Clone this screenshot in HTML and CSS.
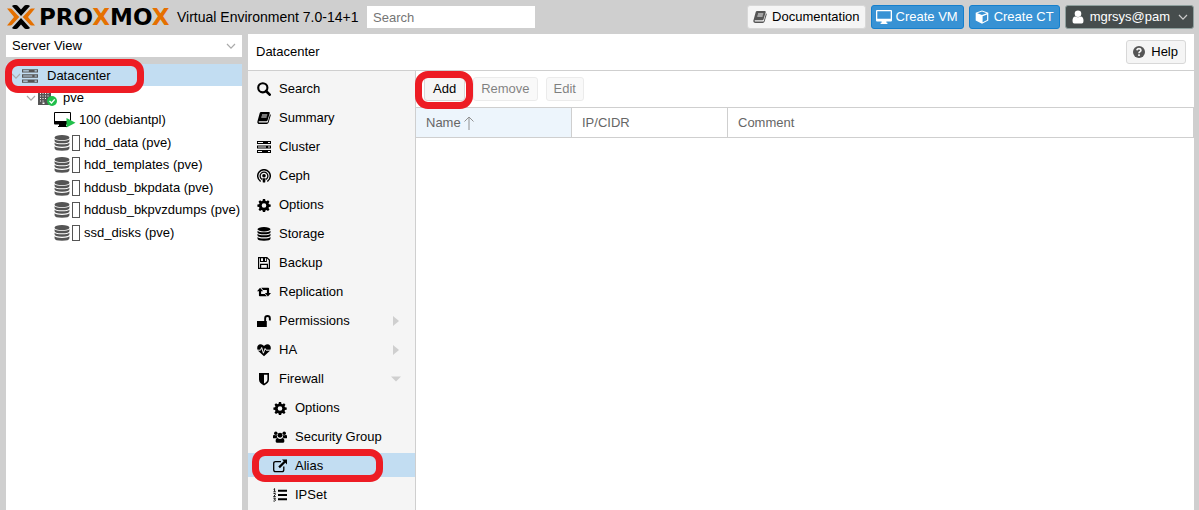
FILE: index.html
```html
<!DOCTYPE html>
<html lang="en">
<head>
<meta charset="utf-8">
<meta name="viewport" content="width=device-width, initial-scale=1">
<title>Proxmox Virtual Environment</title>
<link rel="stylesheet" href="styles.css">
</head>
<body>
<svg class="sprite" aria-hidden="true">
  <symbol id="i-search" viewBox="0 0 14 14"><circle cx="5.8" cy="5.8" r="4.6" fill="none" stroke="currentColor" stroke-width="2.1"/><path d="M9 9l3.7 3.7" stroke="currentColor" stroke-width="2.6" stroke-linecap="round"/></symbol>
  <symbol id="i-book" viewBox="0 0 14 14"><path fill="currentColor" fill-rule="evenodd" d="M4.2 1h7.6c.8 0 1.1.6.9 1.3l-2.1 7c-.2.7-.6 1-1.300 1H2.100c-.4 0-.6.3-.5.6.1.5.6.700 1.200.700h7c.5 0 .9-.2 1-.7L13 3.200c.7.3.9.8.7 1.400l-2.100 7c-.3.900-1 1.400-1.900 1.400H2.500C1 13 0 11.700.4 10.400L2.600 2.500C2.900 1.500 3.300 1 4.200 1zM5.100 3.500l-.3.9h5.300l.3-.9zM4.500 5.600l-.3.9h5.300l.3-.9z"/></symbol>
  <symbol id="i-server" viewBox="0 0 14 14"><path fill="currentColor" fill-rule="evenodd" d="M0 1h14v3H0zM0 5.500h14v3H0zM0 10h14v3H0zM1 2v1h5V2zM1 6.500v1h8v-1zM1 11v1h4v-1zM11 2v1h2V2zM11 6.500v1h2v-1zM11 11v1h2v-1z"/></symbol>
  <symbol id="i-ceph" viewBox="0 0 14 14"><g fill="none" stroke="currentColor" stroke-width="1.300" stroke-linecap="round"><path d="M3.200 12A6.300 6.300 0 1 1 10.800 12" stroke-width="1.500"/><path d="M4.500 10A3.900 3.900 0 1 1 9.500 10"/></g><circle cx="7" cy="6.700" r="1.800" fill="currentColor"/><path fill="currentColor" d="M5.300 9.200h3.400L8.100 13.600H5.900z"/></symbol>
  <symbol id="i-gear" viewBox="0 0 14 14"><path fill="currentColor" fill-rule="evenodd" d="M5.900 1h2.200l.3 1.700 1.100.5 1.500-1 1.500 1.500-1 1.500.5 1.100 1.700.3v2.100l-1.700.3-.5 1.100 1 1.500-1.500 1.500-1.500-1-1.100.5-.3 1.500H5.900l-.3-1.500-1.100-.5-1.500 1-1.500-1.500 1-1.500L2 9 .4 8.700V6.600L2 6.300l.5-1.100-1-1.500L3 2.200l1.500 1 1.100-.5zM7 5.200a2.300 2.300 0 1 0 0 4.600 2.300 2.300 0 0 0 0-4.600z"/></symbol>
  <symbol id="i-db" viewBox="0 0 14 14"><g fill="currentColor"><ellipse cx="7" cy="2.300" rx="6.500" ry="2.200"/><path d="M.5 3.700q1.600 1.500 6.500 1.500t6.500-1.500v1.500q0 2-6.500 2t-6.500-2z"/><path d="M.5 6.700q1.600 1.500 6.500 1.500t6.500-1.500v1.500q0 2-6.500 2t-6.500-2z"/><path d="M.5 9.900q1.600 1.500 6.500 1.500t6.500-1.500v1.700q0 2.200-6.500 2.200t-6.500-2.200z"/></g></symbol>
  <symbol id="i-floppy" viewBox="0 0 14 14"><path fill="none" stroke="currentColor" stroke-width="1.200" d="M1.600 1.600h8.300l2.500 2.500v8.300H1.600zM3.600 12.400V8.300h6.800v4.100"/><path fill="currentColor" fill-rule="evenodd" d="M3 1.500h6.800V6H3zM4 2v3h2V2zM8 2v3h1V2z"/></symbol>
  <symbol id="i-retweet" viewBox="0 0 16 14"><path fill="currentColor" d="M3.500 2L7 6H4.700v3.300H9l2.200 2.600H3.200q-1 0-1-.8V6H0zM12.500 12L9 8h2.300V4.700H7L4.800 2.100h8q1 0 1 .8V8H16z"/></symbol>
  <symbol id="i-unlock" viewBox="0 0 14 14"><path fill="currentColor" d="M0 7h7.200V4.400a3.300 3.300 0 0 1 6.600 0v2.100h-1.900V4.400a1.400 1.400 0 0 0-2.800 0V7h.7v6H0z"/></symbol>
  <symbol id="i-heart" viewBox="0 0 14 14"><path fill="currentColor" d="M7 13.300L1.300 8C-.5 6.100-.3 1.200 3.600 1.200 5.400 1.200 6.400 2.300 7 3c.6-.7 1.600-1.800 3.400-1.800 3.900 0 4.100 4.900 2.300 6.800z"/><path fill="none" stroke="#f5f5f5" stroke-width="1" d="M0 7.200h3.500l1.200-2.700 1.700 5.700 1.700-4.700 1 1.700H14"/></symbol>
  <symbol id="i-shield" viewBox="0 0 14 14"><path fill="currentColor" fill-rule="evenodd" d="M2 1h10v6.600c0 2.900-2.200 4.500-5 5.900-2.800-1.400-5-3-5-5.900zM7 2.700v8.800c2-1.100 3.400-2.200 3.400-4V2.700z"/></symbol>
  <symbol id="i-users" viewBox="0 0 16 14"><g fill="currentColor"><circle cx="3.200" cy="2.600" r="2"/><circle cx="12.800" cy="2.600" r="2"/><path d="M0 8V6.200Q0 4.400 1.200 4.400q1.800 1 3.200.4-.1 1.700.9 2.900-1.100 0-1.800.7H1Q0 8.400 0 8zM16 8V6.200q0-1.800-1.200-1.800-1.800 1-3.200.4.100 1.700-.9 2.900 1.100 0 1.800.7H15q1 0 1-.4z"/><circle cx="8" cy="5" r="2.800"/><path d="M3 11.800q0-3.600 2.300-3.600 1.300 1 2.700 1t2.700-1q2.300 0 2.300 3.600 0 1.900-1.800 1.900H4.800Q3 13.700 3 11.800z"/></g></symbol>
  <symbol id="i-external" viewBox="0 0 14 14"><path fill="none" stroke="currentColor" stroke-width="1.300" d="M8 2.600H2.600q-1.900 0-1.900 1.900v6.300q0 1.900 1.900 1.900h6.300q1.900 0 1.900-1.900V7.500"/><path fill="currentColor" d="M9 .5h5v5l-1.700-1.700-5.400 5.400-1.600-1.600 5.400-5.400z"/></symbol>
  <symbol id="i-listol" viewBox="0 0 14 14"><path fill="currentColor" d="M5 1.700h9v2H5zM5 6h9v2H5zM5 10.300h9v2H5z"/><path fill="none" stroke="currentColor" stroke-width=".9" d="M.6 1.300l1-.7v3M.4 3.800h2.400M.5 5.500h1.800v1L.6 8.600h2.200M.4 10.200h2l-1 1.200q1.200 0 1.100 1-.3 1-2.100.6"/></symbol>
  <symbol id="i-desktop" viewBox="0 0 16 14"><path fill="currentColor" fill-rule="evenodd" d="M1 0h14q1 0 1 1v9.500q0 1-1 1h-4.600v1.200h1V14H4.600v-1.300h1v-1.200H1q-1 0-1-1V1q0-1 1-1zM1.300 1.300v7.400h13.400V1.300z"/></symbol>
  <symbol id="i-cube" viewBox="0 0 14 14"><path fill="currentColor" fill-rule="evenodd" d="M7 .4l6.300 2.300v7.900L7 13.800.7 10.600V2.700zM7 1.600L2.300 3.300 7 5l4.700-1.700zM7.600 6.200v6l4.500-2.300V4.600z"/></symbol>
  <symbol id="i-user" viewBox="0 0 14 14"><circle cx="7" cy="3.700" r="3.300" fill="currentColor"/><path fill="currentColor" d="M1.500 11q0-4.500 2.700-4.500 2.800 1.600 5.600 0 2.700 0 2.700 4.500 0 2.500-1.800 2.500H3.300Q1.500 13.500 1.500 11z"/></symbol>
  <symbol id="i-help" viewBox="0 0 14 14"><circle cx="7" cy="7" r="6" fill="currentColor"/><path fill="none" stroke="#f5f5f5" stroke-width="1.700" d="M4.800 5.300Q5.300 3.700 7 3.700t1.900 1.500Q8.900 6.200 7.900 6.700 7 7.200 7 8.300M7 9.300V11"/></symbol>
  <symbol id="i-building" viewBox="0 0 14 14"><path fill="currentColor" fill-rule="evenodd" d="M0 0h13v14H0zM2 2v1h1V2zM4.500 2v1h1V2zM7 2v1h1V2zM9.500 2v1h1V2zM2 4.500v1h1v-1zM4.500 4.500v1h1v-1zM7 4.500v1h1v-1zM9.500 4.500v1h1v-1zM2 7v1h1V7zM4.500 7v1h1V7zM7 7v1h1V7zM2 9.500v1h1v-1zM4.500 9.500v1h1v-1zM4.500 11.500V13h2v-1.500z"/></symbol>
  <symbol id="i-chevron" viewBox="0 0 10 10"><path fill="none" stroke="currentColor" stroke-width="1.200" d="M1 3l4 4.200L9 3"/></symbol>
  <symbol id="i-right" viewBox="0 0 10 10"><path fill="currentColor" d="M2 0l6 5-6 5z"/></symbol>
  <symbol id="i-down" viewBox="0 0 10 10"><path fill="currentColor" d="M0 2.500h10L5 7.500z"/></symbol>
</svg>

<div class="app">
  <header class="topbar">
    <div class="brand">
      <svg class="mark" viewBox="0 0 28 26" aria-hidden="true">
        <path fill="#000" d="M5 2Q6 1 7.200 1H9q1 0 1.700.8L14 5.500l3.300-3.700Q18 1 19 1h1.800Q22 1 23 2l-9 10zM5 24q1 1 2.200 1H9q1 0 1.700-.8l3.300-3.700 3.300 3.700q.7.800 1.700.8h1.800q1.200 0 2.200-1l-9-10z"/>
        <path fill="#e57000" d="M0 4.500h3.300q1.200 0 2 .9l7 7.600-7 7.600q-.8.900-2 .9H0L7 13zM28 4.500h-3.300q-1.200 0-2 .9l-7 7.600 7 7.600q.8.900 2 .9H28L21 13z"/>
      </svg>
      <span class="wordmark">PRO<span class="accent">X</span>MO<span class="accent">X</span></span>
    </div>
    <span class="version">Virtual Environment 7.0-14+1</span>
    <input class="search" type="search" placeholder="Search" aria-label="Search">
    <div class="actions">
      <button class="btn" type="button"><svg class="icon"><use href="#i-book"/></svg>Documentation</button>
      <button class="btn primary" type="button"><svg class="icon wide"><use href="#i-desktop"/></svg>Create VM</button>
      <button class="btn primary" type="button"><svg class="icon"><use href="#i-cube"/></svg>Create CT</button>
      <button class="btn account" type="button"><svg class="icon"><use href="#i-user"/></svg>mgrsys@pam<svg class="chevron"><use href="#i-chevron"/></svg></button>
    </div>
  </header>

  <aside class="sidebar">
    <div class="view">
      <select class="view-select" aria-label="View"><option>Server View</option></select>
      <svg class="chevron"><use href="#i-chevron"/></svg>
    </div>
    <ul class="tree">
      <li class="node selected"><svg class="chevron"><use href="#i-chevron"/></svg><svg class="icon wide"><use href="#i-server"/></svg><a class="label" href="#dc">Datacenter</a><span class="marker"></span></li>
      <li class="node depth1"><svg class="chevron"><use href="#i-chevron"/></svg>
        <svg class="node-icon" viewBox="0 0 20 16"><use href="#i-building" y="1" width="14" height="14"/><circle cx="14" cy="11" r="5" fill="#21bf4b"/><path d="M11.500 11l2 2 3.200-3.600" fill="none" stroke="#fff" stroke-width="1.400"/></svg>
        <a class="label" href="#pve">pve</a></li>
      <li class="node depth2">
        <svg class="vm-icon" viewBox="0 0 22 16"><path fill="#000" fill-rule="evenodd" d="M1 0h15q1 0 1 1v10.500q0 1-1 1h-4V14h1v1H4v-1h1v-1.500H1q-1 0-1-1V1q0-1 1-1zM1 1v8h15V1z"/><path fill="#21bf4b" d="M12.500 6l9 4.800-9 4.800z"/></svg>
        <a class="label" href="#vm100">100 (debiantpl)</a></li>
      <li class="node depth2"><svg class="icon wide"><use href="#i-db"/></svg><span class="usage"></span><a class="label" href="#s1">hdd_data (pve)</a></li>
      <li class="node depth2"><svg class="icon wide"><use href="#i-db"/></svg><span class="usage"></span><a class="label" href="#s2">hdd_templates (pve)</a></li>
      <li class="node depth2"><svg class="icon wide"><use href="#i-db"/></svg><span class="usage"></span><a class="label" href="#s3">hddusb_bkpdata (pve)</a></li>
      <li class="node depth2"><svg class="icon wide"><use href="#i-db"/></svg><span class="usage"></span><a class="label" href="#s4">hddusb_bkpvzdumps (pve)</a></li>
      <li class="node depth2"><svg class="icon wide"><use href="#i-db"/></svg><span class="usage"></span><a class="label" href="#s5">ssd_disks (pve)</a></li>
    </ul>
  </aside>

  <main class="panel">
    <div class="panel-head">
      <h1 class="title">Datacenter</h1>
      <button class="btn" type="button"><svg class="icon"><use href="#i-help"/></svg>Help</button>
    </div>
    <nav class="menu" aria-label="Datacenter">
      <a class="item" href="#search"><svg class="icon"><use href="#i-search"/></svg>Search</a>
      <a class="item" href="#summary"><svg class="icon"><use href="#i-book"/></svg>Summary</a>
      <a class="item" href="#cluster"><svg class="icon"><use href="#i-server"/></svg>Cluster</a>
      <a class="item" href="#ceph"><svg class="icon"><use href="#i-ceph"/></svg>Ceph</a>
      <a class="item" href="#options"><svg class="icon"><use href="#i-gear"/></svg>Options</a>
      <a class="item" href="#storage"><svg class="icon"><use href="#i-db"/></svg>Storage</a>
      <a class="item" href="#backup"><svg class="icon"><use href="#i-floppy"/></svg>Backup</a>
      <a class="item" href="#replication"><svg class="icon"><use href="#i-retweet"/></svg>Replication</a>
      <a class="item" href="#permissions"><svg class="icon"><use href="#i-unlock"/></svg>Permissions<svg class="arrow"><use href="#i-right"/></svg></a>
      <a class="item" href="#ha"><svg class="icon"><use href="#i-heart"/></svg>HA<svg class="arrow"><use href="#i-right"/></svg></a>
      <a class="item" href="#firewall"><svg class="icon"><use href="#i-shield"/></svg>Firewall<svg class="arrow"><use href="#i-down"/></svg></a>
      <a class="item sub" href="#fw-options"><svg class="icon"><use href="#i-gear"/></svg>Options</a>
      <a class="item sub" href="#groups"><svg class="icon"><use href="#i-users"/></svg>Security Group</a>
      <a class="item sub selected" href="#alias"><svg class="icon"><use href="#i-external"/></svg>Alias<span class="marker"></span></a>
      <a class="item sub" href="#ipset"><svg class="icon"><use href="#i-listol"/></svg>IPSet</a>
    </nav>
    <section class="content">
      <div class="toolbar">
        <div class="marked"><button class="btn text" type="button">Add</button><span class="marker"></span></div>
        <button class="btn text" type="button" disabled>Remove</button>
        <button class="btn text" type="button" disabled>Edit</button>
      </div>
      <table class="grid">
        <thead>
          <tr>
            <th class="col sorted" scope="col">Name <svg class="sort" viewBox="0 0 10 14" aria-hidden="true"><path d="M5 14V1M.500 5.500L5 1l4.500 4.500" fill="none" stroke="#919191"/></svg></th>
            <th class="col" scope="col">IP/CIDR</th>
            <th class="col rest" scope="col">Comment</th>
          </tr>
        </thead>
      </table>
    </section>
  </main>
</div>
</body>
</html>
```
FILE: styles.css
```css
* { box-sizing: border-box; }

body {
  margin: 0;
  background: #cfcfcf;
  color: #000;
  font: 13px/16px "Liberation Sans", Arial, sans-serif;
}

button, input, select { font: inherit; color: inherit; }
a { color: inherit; text-decoration: none; }
svg { flex: none; }
.sprite { position: absolute; width: 0; height: 0; }

.app {
  display: grid;
  grid-template: 34px 1fr / 236px 1fr;
  column-gap: 6px;
  height: 100vh;
  padding: 0 5px 0 6px;
  overflow: hidden;
}

/* Top bar */
.topbar {
  grid-column: 1 / -1;
  display: flex;
  align-items: center;
}
.brand {
  display: flex;
  align-items: center;
  gap: 4px;
  width: 171px;
  padding-left: 1px;
}
.mark { width: 28px; height: 26px; }
.wordmark { font: bold 23px/26px "DejaVu Sans", sans-serif; }
.accent { color: #e57000; }
.version { width: 190px; font-size: 14px; white-space: nowrap; }
.search {
  width: 168px;
  height: 22px;
  padding: 0 6px;
  border: 0;
  background: #fff;
  appearance: none;
}
.search::placeholder { color: #757575; opacity: 1; }
.actions { display: flex; gap: 5px; margin-left: auto; }

/* Buttons */
.btn {
  display: flex;
  align-items: center;
  gap: 4px;
  height: 24px;
  padding: 0 7px 0 4px;
  border: 1px solid #d8d8d8;
  border-radius: 3px;
  background: #f5f5f5;
  white-space: nowrap;
}
.btn .icon { width: 16px; color: #555; }
.btn.primary { background: #3892d4; border-color: #157fcc; color: #fff; }
.btn.account { background: #464d4d; border-color: #8fa09e; color: #fff; }
.btn.primary .icon, .btn.account .icon { color: #fff; }
.btn.account .chevron { margin-left: 4px; color: #ccc; }
.actions .btn { padding-right: 5px; }
.btn.text { padding: 0 8px; }
.btn.text:disabled { padding: 0 7px; opacity: 0.5; }

.icon { width: 14px; height: 14px; }
.icon.wide { width: 16px; height: 16px; }
.btn .icon.wide { height: 14px; }
.chevron { width: 10px; height: 10px; color: #aaa; }

/* Resource tree */
.sidebar {
  display: flex;
  flex-direction: column;
  gap: 7px;
  padding-top: 1px;
}
.view {
  display: grid;
  grid-template-columns: 1fr 10px;
  align-items: center;
  height: 22px;
  padding-right: 6px;
  background: #fff;
}
.view-select {
  height: 22px;
  padding: 0 6px;
  border: 0;
  background: transparent;
  appearance: none;
}
.tree {
  flex: 1;
  margin: 0;
  padding: 0;
  background: #fff;
  list-style: none;
}
.node {
  position: relative;
  display: flex;
  align-items: center;
  height: 22px;
  padding-left: 5px;
  color: #555;
}
.node:nth-child(even) { height: 23px; }
.node .label { color: #000; white-space: nowrap; }
.node.selected { padding-top: 2px; background: #c2ddf2; }
.node.selected .icon { margin: 0 9px 0 1px; }
.depth1 { padding-left: 20px; }
.depth2 { padding-left: 48px; }
.node-icon { width: 20px; height: 16px; margin: 0 5px 0 2px; }
.vm-icon { width: 22px; height: 16px; margin-right: 3px; }
.usage {
  width: 8px;
  height: 16px;
  margin: 0 4px 0 2px;
  border: 1px solid #555;
}

/* Main panel */
.panel {
  display: grid;
  grid-template: 37px 1fr / 168px 1fr;
  min-height: 0;
  background: #fff;
}
.panel-head {
  grid-column: 1 / -1;
  display: flex;
  align-items: center;
  justify-content: space-between;
  padding: 0 8px;
  border-bottom: 1px solid #cfcfcf;
}
.title { margin: 0; font-size: 13px; font-weight: normal; }

.menu {
  display: flex;
  flex-direction: column;
  gap: 5px;
  padding-top: 5px;
  border-right: 1px solid #cfcfcf;
  background: #f5f5f5;
}
.item {
  position: relative;
  display: flex;
  flex: none;
  align-items: center;
  gap: 8px;
  height: 24px;
  padding: 2px 14px 0 9px;
}
.item .icon { width: 14px; }
.item.sub { padding-left: 25px; }
.item.selected { background: #c2ddf2; }
.arrow { width: 10px; height: 10px; margin-left: auto; color: #cfcfcf; }

.toolbar { display: flex; gap: 8px; padding: 6px 8px; }
.marked { position: relative; }

.grid {
  width: 100%;
  border-spacing: 0;
  table-layout: fixed;
  color: #666;
}
.col {
  width: 156px;
  height: 31px;
  padding: 0 10px;
  border: 1px solid #cfcfcf;
  border-left: 0;
  font-weight: normal;
  text-align: left;
}
.col.rest { width: auto; }
.col.sorted { background: #edf5fc; }
.sort { width: 10px; height: 14px; vertical-align: -3px; }

/* Highlight rings */
.marker {
  position: absolute;
  z-index: 1;
  border: 7px solid #ed1c24;
  border-radius: 13px;
  pointer-events: none;
}
.node .marker { left: -1px; top: -5px; width: 139px; height: 34px; }
.item .marker { left: 4px; top: -4px; width: 131px; height: 33px; }
.marked .marker { left: -9px; top: -6px; width: 58px; height: 38px; }
```
